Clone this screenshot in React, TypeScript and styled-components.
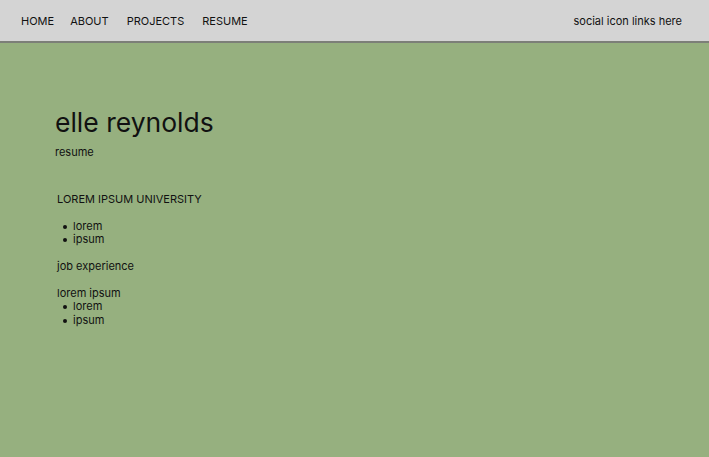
import { createGlobalStyle } from 'styled-components';
import styled from 'styled-components';

const GlobalStyle = createGlobalStyle`
  html, body {
    margin: 0;
    padding: 0;
    background: #96b07f;
    font-family: Inter, "Noto Sans", sans-serif;
    color: #111;
  }
`;

const Page = styled.div`
  min-height: 457px;
  background: #96b07f;
`;

const NavBar = styled.nav`
  height: 41px;
  background: #d4d4d4;
  border-bottom: 2px solid #7c7f78;
  display: flex;
  align-items: center;
  justify-content: space-between;
  padding: 0 27px 0 21px;
  font-size: 11px;
`;

const NavLinks = styled.div`
  display: flex;
  gap: 16px;
`;

const NavLink = styled.a<{ extra?: number }>`
  color: #111;
  text-decoration: none;
  margin-left: ${({ extra }) => extra ?? 0}px;
`;

const Social = styled.span`
  color: #111;
`;

const Main = styled.main`
  padding: 63px 0 0 55px;
`;

const Title = styled.h1`
  margin: 0;
  font-size: 26.5px;
  font-weight: 400;
  line-height: 32px;
`;

const Subtitle = styled.p`
  margin: 8px 0 0;
  font-size: 11px;
  line-height: 13px;
`;

const Section = styled.section`
  margin-top: 34px;
  padding-left: 2px;
  font-size: 11px;
  line-height: 13.4px;
`;

const Heading = styled.p<{ gap?: number }>`
  margin: ${({ gap }) => gap ?? 0}px 0 0;
`;

const List = styled.ul<{ gap?: number }>`
  margin: ${({ gap }) => gap ?? 0}px 0 0;
  padding-left: 16px;
  list-style: none;
`;

const Item = styled.li`
  position: relative;

  &::before {
    content: '';
    position: absolute;
    left: -10px;
    top: 5px;
    width: 4px;
    height: 4px;
    border-radius: 50%;
    background: #111;
  }
`;

export default function App() {
  return (
    <Page>
      <GlobalStyle />
      <NavBar>
        <NavLinks>
          <NavLink href="#">HOME</NavLink>
          <NavLink href="#">ABOUT</NavLink>
          <NavLink href="#" extra={2}>PROJECTS</NavLink>
          <NavLink href="#" extra={2}>RESUME</NavLink>
        </NavLinks>
        <Social>social icon links here</Social>
      </NavBar>
      <Main>
        <Title>elle reynolds</Title>
        <Subtitle>resume</Subtitle>
        <Section>
          <Heading>LOREM IPSUM UNIVERSITY</Heading>
          <List gap={13.4}>
            <Item>lorem</Item>
            <Item>ipsum</Item>
          </List>
          <Heading gap={13.4}>job experience</Heading>
          <Heading gap={13.4}>lorem ipsum</Heading>
          <List>
            <Item>lorem</Item>
            <Item>ipsum</Item>
          </List>
        </Section>
      </Main>
    </Page>
  );
}
